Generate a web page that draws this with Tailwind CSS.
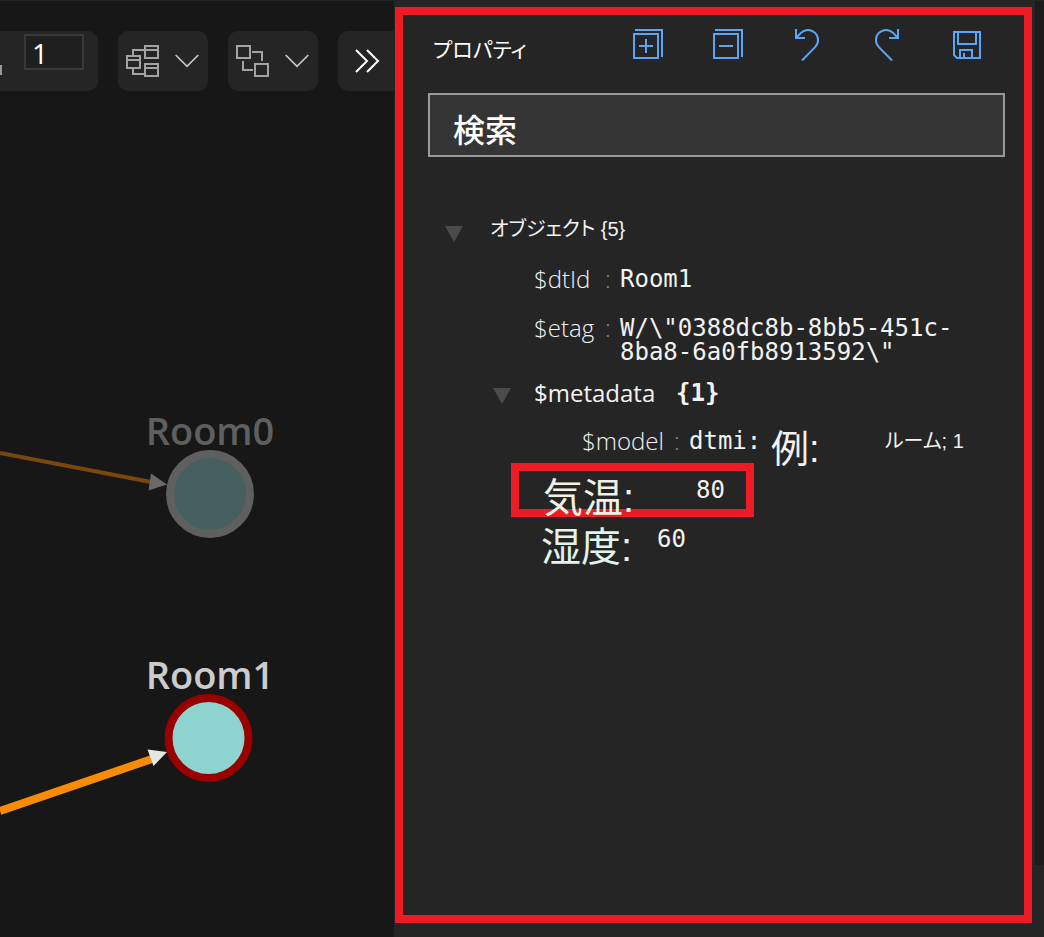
<!DOCTYPE html>
<html lang="ja">
<head>
<meta charset="utf-8">
<title>プロパティ</title>
<script src="https://cdn.jsdelivr.net/npm/@tailwindcss/browser@4"></script>
</head>
<body class="flex min-h-screen bg-[#171717] text-white font-['Open_Sans','Noto_Sans_CJK_JP',sans-serif]">

<!-- Graph viewer -->
<main class="flex min-w-0 flex-1 flex-col overflow-hidden border-t border-[#222222]">
  <div class="mt-[30px] flex h-15 gap-5">
    <div class="relative flex w-[98px] shrink-0 items-start rounded-r-[10px] bg-[#252525] pt-[3px] pl-6">
      <span class="absolute top-[34px] left-0 h-2.5 w-0.5 bg-[#999999]"></span>
      <input aria-label="レベル" value="1" class="h-9 w-15 border-2 border-[#383838] bg-[#1f1f1f] pt-0.5 pl-1.5 text-[28px] leading-8 text-white outline-none">
    </div>
    <button aria-label="レイアウト" class="flex w-[90px] shrink-0 items-center gap-3.5 rounded-[10px] bg-[#252525] pl-[7px]">
      <svg class="h-[34px] w-9" viewBox="0 0 36 34" fill="none" stroke="#a3a3a3" stroke-width="2"><path d="M20 2h13v12H20zM20 6h13M2 12h13v12H2zM2 16h13M20 20h13v12H20zM20 24h13M8 12V6h12M8 24v6h12"/></svg>
      <svg class="h-3.5 w-6" viewBox="0 0 24 14" fill="none" stroke="#c8c8c8" stroke-width="1.7"><path d="M.7 1L12 12.3 23.3 1"/></svg>
    </button>
    <button aria-label="展開" class="flex w-[90px] shrink-0 items-center gap-3.5 rounded-[10px] bg-[#252525] pl-[7px]">
      <svg class="h-[34px] w-9" viewBox="0 0 36 34" fill="none" stroke="#a3a3a3" stroke-width="2"><path d="M2 2h13v12H2zM20 20h13v12H20zM17 8h10v9M8 17v9h10"/></svg>
      <svg class="h-3.5 w-6" viewBox="0 0 24 14" fill="none" stroke="#c8c8c8" stroke-width="1.7"><path d="M.7 1L12 12.3 23.3 1"/></svg>
    </button>
    <button aria-label="その他" class="flex w-[90px] shrink-0 items-center rounded-[10px] bg-[#252525] pl-4">
      <svg class="h-6 w-7" viewBox="0 0 28 24" fill="none" stroke="#ffffff" stroke-width="2"><path d="M2 1l11 11L2 23M13 1l11 11-11 11"/></svg>
    </button>
  </div>
  <svg class="w-full flex-1" role="img" aria-label="ツイン グラフ" font-family="'Open Sans',sans-serif" font-weight="600" font-size="38" text-anchor="middle">
    <path d="M0 362L151 391" stroke="#7a480d" stroke-width="4"/>
    <path d="M151 382.500L148.500 399.500 167 393.500z" fill="#6a6a6a"/>
    <circle cx="210" cy="403" r="40" fill="#46605f" stroke="#5f5f5f" stroke-width="8"/>
    <text x="210" y="354" fill="#5f5f5f">Room0</text>
    <path d="M0 720L152 668" stroke="#f98c06" stroke-width="8"/>
    <path d="M147.500 658.500L153.500 675 167 661z" fill="#e8e6e3"/>
    <circle cx="208.500" cy="647" r="40" fill="#8dd3cf" stroke="#990000" stroke-width="8"/>
    <text x="210" y="598" fill="#cccccc">Room1</text>
  </svg>
</main>

<!-- Properties panel -->
<aside class="flex w-[650px] shrink-0 bg-[#252525]">
  <section class="mt-[7px] mr-[3px] mb-3.5 ml-px flex-1 border-8 border-[#ed1c24] pr-[19px] pl-[25px]">
    <header class="flex h-[78px] items-start justify-between pt-3.5 pr-[21px] pl-[5px]">
      <h1 class="pt-1 text-[21px] leading-8 [font-feature-settings:'palt']">プロパティ</h1>
      <div class="flex gap-12">
        <button aria-label="すべて展開"><svg class="size-8" viewBox="0 0 32 32" fill="none" stroke="#5ba5f7" stroke-width="2"><path d="M2 5h24v24H2zM3 1h27v27M7 17h14M14 10v14"/></svg></button>
        <button aria-label="すべて折りたたむ"><svg class="size-8" viewBox="0 0 32 32" fill="none" stroke="#5ba5f7" stroke-width="2"><path d="M2 5h24v24H2zM3 1h27v27M7 17h14"/></svg></button>
        <button aria-label="元に戻す"><svg class="size-8" viewBox="0 0 32 32" fill="none" stroke="#5ba5f7" stroke-width="2"><path d="M4 0v9h9M4 9l4.900-5.100A10 10 0 0 1 23.100 18.100L10 31.500"/></svg></button>
        <button aria-label="やり直し"><svg class="size-8" viewBox="0 0 32 32" fill="none" stroke="#5ba5f7" stroke-width="2"><path d="M26 0v9h-9M26 9l-4.900-5.100A10 10 0 0 0 6.900 18.100L20 31.500"/></svg></button>
        <button aria-label="保存"><svg class="size-8" viewBox="0 0 32 32" fill="none" stroke="#5ba5f7" stroke-width="2"><path d="M2 3h26v26H5l-3-3zM6 3v12h18V3M8 29v-8h12v8M12 24v5"/></svg></button>
      </div>
    </header>

    <input type="search" aria-label="検索" placeholder="検索" class="block h-16 w-full border-2 border-[#999999] bg-[#353535] pt-2 pl-[23px] text-[32px] font-medium text-white outline-none placeholder:text-white">

    <ul class="mt-[47px] text-2xl leading-6 text-[#f2f2f2]">
      <li>
        <div class="flex h-[50px] items-center pl-[17px]">
          <button aria-label="オブジェクトを折りたたむ" class="mt-2.5 mr-[27px]"><svg class="h-4 w-[18px]" viewBox="0 0 18 16" fill="#4b4b4b"><path d="M0 0h18L9 16z"/></svg></button>
          <span class="text-xl font-['Liberation_Sans','Noto_Sans_CJK_JP',sans-serif] [font-feature-settings:'palt']">オブジェクト {5}</span>
        </div>
        <ul>
          <li class="flex h-[50px] items-center pl-[106px]">
            <span class="w-[71px] font-light">$dtId</span><span class="w-[15px] font-light text-[#888888]">:</span>
            <span class="font-['DejaVu_Sans_Mono',monospace]">Room1</span>
          </li>
          <li class="flex h-16 pt-3 pl-[106px]">
            <span class="w-[71px] font-light">$etag</span><span class="w-[15px] font-light text-[#888888]">:</span>
            <span class="w-[350px] font-['DejaVu_Sans_Mono',monospace]">W/\"0388dc8b-8bb5-451c-<wbr>8ba8-6a0fb8913592\"</span>
          </li>
          <li>
            <div class="flex h-[50px] items-center pl-[65px]">
              <button aria-label="$metadata を折りたたむ" class="mt-1.5 mr-[23px]"><svg class="h-4 w-[18px]" viewBox="0 0 18 16" fill="#4b4b4b"><path d="M0 0h18L9 16z"/></svg></button>
              <span class="w-[142px]">$metadata</span>
              <span class="font-bold font-['DejaVu_Sans_Mono',monospace]">{1}</span>
            </div>
            <ul>
              <li class="flex h-[45px] items-center pl-[154px]">
                <span class="w-[92px] font-light">$model</span><span class="w-[15px] font-light text-[#888888]">:</span>
                <span class="w-[82px] font-['DejaVu_Sans_Mono',monospace]">dtmi:</span>
                <span class="w-[114px] pt-4 text-[38px] font-['Liberation_Sans','Noto_Sans_CJK_JP',sans-serif]">例:</span>
                <span class="text-xl font-['Liberation_Sans','Noto_Sans_CJK_JP',sans-serif] [font-feature-settings:'palt']">ルーム; 1</span>
              </li>
            </ul>
          </li>
          <li class="ml-[83px] flex h-[54px] w-[243px] items-center border-8 border-[#ed1c24] pl-6">
            <span class="w-[153px] pt-4 text-[40px] text-[#f0f0e3] font-['Liberation_Sans','Noto_Sans_CJK_JP',sans-serif]">気温:</span>
            <span class="font-['DejaVu_Sans_Mono',monospace]">80</span>
          </li>
          <li class="flex h-11 items-center pl-[113px]">
            <span class="w-[116px] pt-4 text-[40px] text-[#e0f3ec] font-['Liberation_Sans','Noto_Sans_CJK_JP',sans-serif]">湿度:</span>
            <span class="font-['DejaVu_Sans_Mono',monospace]">60</span>
          </li>
        </ul>
      </li>
    </ul>
  </section>
  <div class="mt-px mb-[72px] w-[9px] bg-[#1c1c1c]"></div>
</aside>
</body>
</html>
